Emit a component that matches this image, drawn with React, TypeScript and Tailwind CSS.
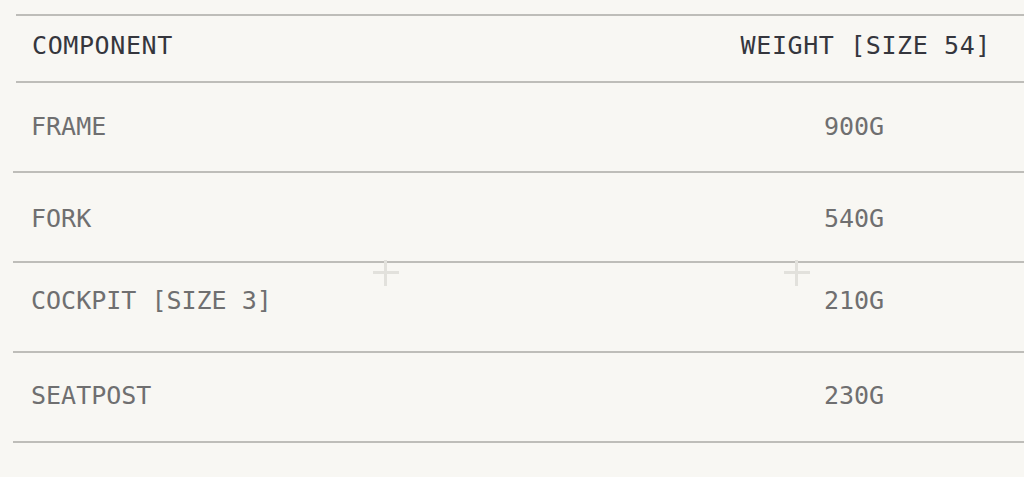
const rows = [
  { name: 'FRAME', weight: '900G', pad: 'pb-[0px]' },
  { name: 'FORK', weight: '540G', pad: 'pt-[4px]' },
  { name: 'COCKPIT [SIZE 3]', weight: '210G', pad: 'pb-[12px]' },
  { name: 'SEATPOST', weight: '230G', pad: 'pb-[2px]' },
]

// faint crosshair marks that sit over the table
function Plus({ className }: { className: string }) {
  return (
    <svg className={`pointer-events-none absolute ${className}`} width="26" height="26" viewBox="0 0 26 26" aria-hidden>
      <path d="M0 12.5h26M12.5 0v26" stroke="#e2e1dc" strokeWidth="3" />
    </svg>
  )
}

export default function App() {
  return (
    <div className="relative min-h-screen w-full overflow-hidden bg-[#f8f7f3] pt-[14px] font-['DejaVu_Sans_Mono','Liberation_Mono',monospace]">
      <div className="ml-[13px]">
        {/* header */}
        <div className="ml-[3px] grid h-[69px] grid-cols-[1fr_274px] items-center border-y-2 border-[#bebdb9] pb-[5px] pl-[16px] pr-[33px] text-[25px] tracking-[0.6px] text-[#35363d]">
          <span>COMPONENT</span>
          <span className="text-right">WEIGHT [SIZE 54]</span>
        </div>

        {rows.map((r) => (
          <div
            key={r.name}
            className={`grid h-[90px] grid-cols-[1fr_274px] items-center border-b-2 border-[#bebdb9] pl-[18px] pr-[33px] text-[25px] text-[#6f6f70] ${r.pad}`}
          >
            <span>{r.name}</span>
            <span className="text-center">{r.weight}</span>
          </div>
        ))}
      </div>

      <Plus className="left-[373px] top-[260px]" />
      <Plus className="left-[784px] top-[260px]" />
    </div>
  )
}
